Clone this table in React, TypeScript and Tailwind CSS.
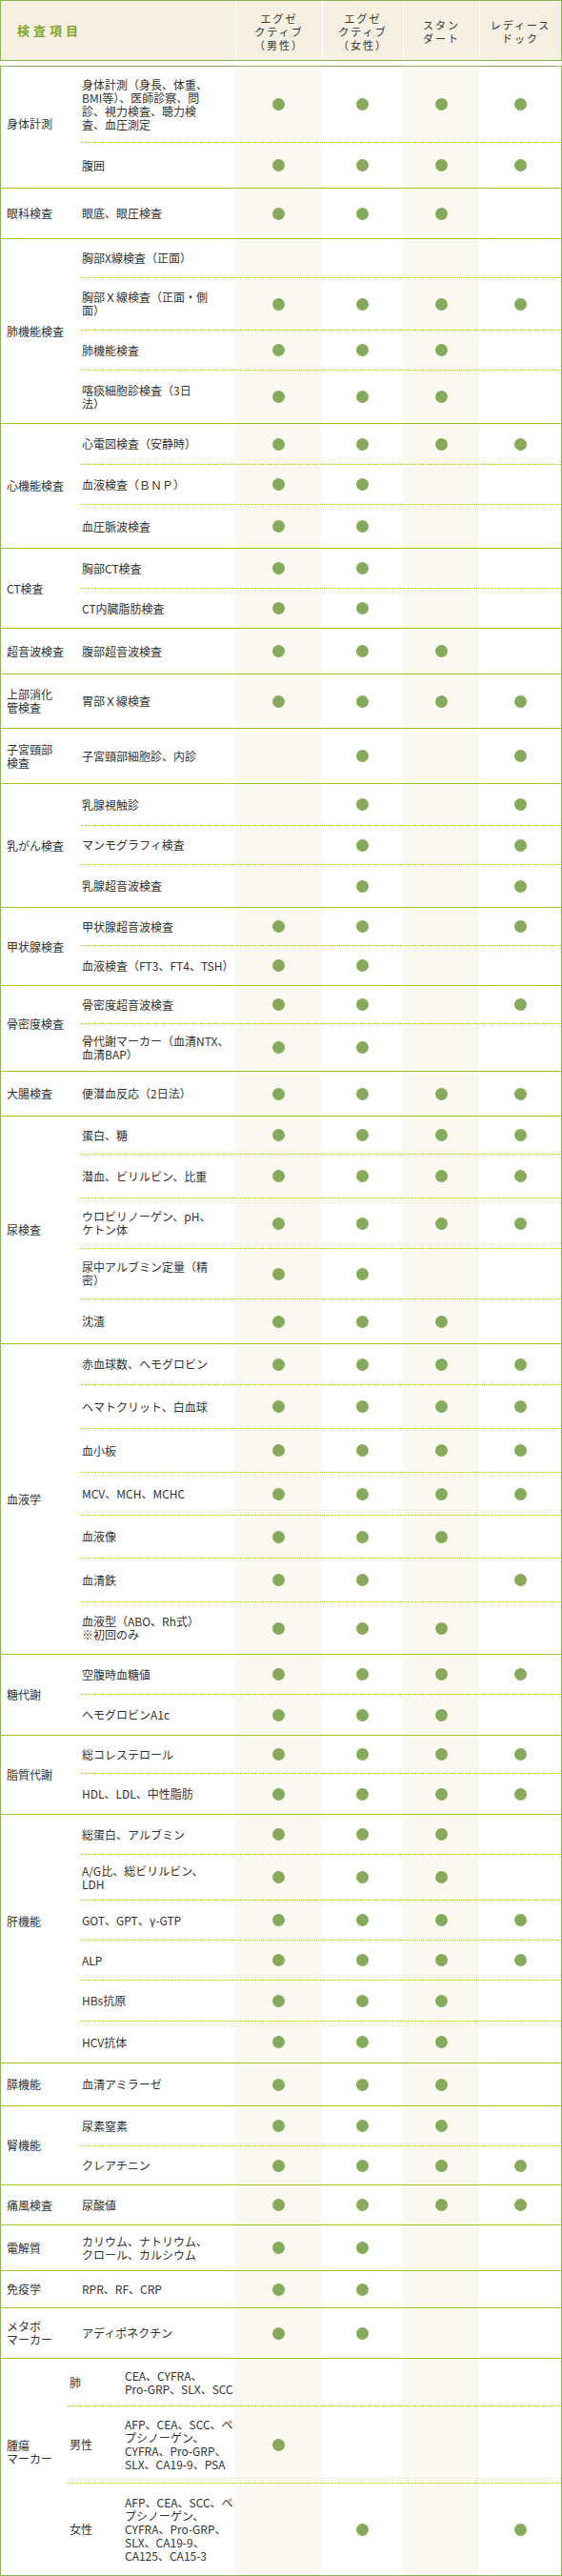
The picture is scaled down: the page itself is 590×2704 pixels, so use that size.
import React from "react";

type Row = { t: string; h: number; d: string; sub?: string };
type Group = { cat: string; rows: Row[]; pb?: string; narrow?: boolean };

const heads = [
  { t: "エグゼ\nクティブ\n（男性）", w: "w-[91px]" },
  { t: "エグゼ\nクティブ\n（女性）", w: "w-[85px]" },
  { t: "スタン\nダート", w: "w-[80px]" },
  { t: "レディース\nドック", w: "flex-1" },
];

const groups: Group[] = [
  {
    cat: "身体計測",
    pb: "pb-[8px]",
    rows: [
      { t: "身体計測（身長、体重、\nBMI等）、医師診察、問\n診、視力検査、聴力検\n査、血圧測定", h: 80, d: "1111" },
      { t: "腹囲", h: 48, d: "1111" },
    ],
  },
  { cat: "眼科検査", rows: [{ t: "眼底、眼圧検査", h: 53, d: "1110" }] },
  {
    cat: "肺機能検査",
    rows: [
      { t: "胸部X線検査（正面）", h: 41, d: "0000" },
      { t: "胸部Ｘ線検査（正面・側\n面）", h: 55, d: "1111" },
      { t: "肺機能検査", h: 42, d: "1110" },
      { t: "喀痰細胞診検査（3日\n法）", h: 56, d: "1110" },
    ],
  },
  {
    cat: "心機能検査",
    rows: [
      { t: "心電図検査（安静時）", h: 43, d: "1111" },
      { t: "血液検査（ＢＮＰ）", h: 42, d: "1100" },
      { t: "血圧脈波検査", h: 46, d: "1100" },
    ],
  },
  {
    cat: "CT検査",
    rows: [
      { t: "胸部CT検査", h: 42, d: "1100" },
      { t: "CT内臓脂肪検査", h: 42, d: "1100" },
    ],
  },
  { cat: "超音波検査", rows: [{ t: "腹部超音波検査", h: 48, d: "1110" }] },
  { cat: "上部消化\n管検査", rows: [{ t: "胃部Ｘ線検査", h: 57, d: "1111" }] },
  { cat: "子宮頸部\n検査", rows: [{ t: "子宮頸部細胞診、内診", h: 58, d: "0101" }] },
  {
    cat: "乳がん検査",
    rows: [
      { t: "乳腺視触診", h: 44, d: "0101" },
      { t: "マンモグラフィ検査", h: 41, d: "0101" },
      { t: "乳腺超音波検査", h: 45, d: "0101" },
    ],
  },
  {
    cat: "甲状腺検査",
    rows: [
      { t: "甲状腺超音波検査", h: 40, d: "1101" },
      { t: "血液検査（FT3、FT4、TSH）", h: 42, d: "1100" },
    ],
  },
  {
    cat: "骨密度検査",
    pb: "pb-[10px]",
    rows: [
      { t: "骨密度超音波検査", h: 40, d: "1101" },
      { t: "骨代謝マーカー（血清NTX、\n血清BAP）", h: 50, d: "1100" },
    ],
  },
  { cat: "大腸検査", rows: [{ t: "便潜血反応（2日法）", h: 47, d: "1111" }] },
  {
    cat: "尿検査",
    rows: [
      { t: "蛋白、糖", h: 40, d: "1111" },
      { t: "潜血、ビリルビン、比重", h: 46, d: "1111" },
      { t: "ウロビリノーゲン、pH、\nケトン体", h: 53, d: "1111" },
      { t: "尿中アルブミン定量（精\n密）", h: 53, d: "1100" },
      { t: "沈渣", h: 47, d: "1110" },
    ],
  },
  {
    cat: "血液学",
    rows: [
      { t: "赤血球数、ヘモグロビン", h: 43, d: "1111" },
      { t: "ヘマトクリット、白血球", h: 46, d: "1111" },
      { t: "血小板", h: 46, d: "1111" },
      { t: "MCV、MCH、MCHC", h: 45, d: "1111" },
      { t: "血液像", h: 45, d: "1110" },
      { t: "血清鉄", h: 46, d: "1101" },
      { t: "血液型（ABO、Rh式）\n※初回のみ", h: 55, d: "1110" },
    ],
  },
  {
    cat: "糖代謝",
    rows: [
      { t: "空腹時血糖値", h: 42, d: "1111" },
      { t: "ヘモグロビンA1c", h: 43, d: "1110" },
    ],
  },
  {
    cat: "脂質代謝",
    rows: [
      { t: "総コレステロール", h: 40, d: "1111" },
      { t: "HDL、LDL、中性脂肪", h: 43, d: "1111" },
    ],
  },
  {
    cat: "肝機能",
    pb: "pb-[36px]",
    rows: [
      { t: "総蛋白、アルブミン", h: 42, d: "1110" },
      { t: "A/G比、総ビリルビン、\nLDH", h: 48, d: "1110" },
      { t: "GOT、GPT、γ-GTP", h: 42, d: "1111" },
      { t: "ALP", h: 42, d: "1111" },
      { t: "HBs抗原", h: 43, d: "1110" },
      { t: "HCV抗体", h: 44, d: "1110" },
    ],
  },
  { cat: "膵機能", rows: [{ t: "血清アミラーゼ", h: 45, d: "1110" }] },
  {
    cat: "腎機能",
    rows: [
      { t: "尿素窒素", h: 42, d: "1110" },
      { t: "クレアチニン", h: 41, d: "1111" },
    ],
  },
  { cat: "痛風検査", rows: [{ t: "尿酸値", h: 42, d: "1111" }] },
  { cat: "電解質", rows: [{ t: "カリウム、ナトリウム、\nクロール、カルシウム", h: 48, d: "1100" }] },
  { cat: "免疫学", rows: [{ t: "RPR、RF、CRP", h: 39, d: "1100" }] },
  { cat: "メタボ\nマーカー", rows: [{ t: "アディポネクチン", h: 53, d: "1100" }] },
  {
    cat: "腫瘍\nマーカー",
    pb: "pb-[32px]",
    narrow: true,
    rows: [
      { sub: "肺", t: "CEA、CYFRA、\nPro-GRP、SLX、SCC", h: 50, d: "0000" },
      { sub: "男性", t: "AFP、CEA、SCC、ペ\nプシノーゲン、\nCYFRA、Pro-GRP、\nSLX、CA19-9、PSA", h: 81, d: "1000" },
      { sub: "女性", t: "AFP、CEA、SCC、ペ\nプシノーゲン、\nCYFRA、Pro-GRP、\nSLX、CA19-9、\nCA125、CA15-3", h: 97, d: "0101" },
    ],
  },
];

const dotCols = [
  "w-[91px] bg-[#faf8f1]",
  "w-[85px]",
  "w-[80px] bg-[#faf8f1]",
  "flex-1",
];

function Dot() {
  return <span className="block h-[13px] w-[13px] rounded-full bg-[#86aa5c]" />;
}

function Header() {
  return (
    <div className="flex h-[64px] border border-[#8cb25a] bg-[#f5f0e1]">
      <div className="flex w-[246px] items-center pl-[17px] text-[13px] font-bold tracking-[4px] text-[#7ea62c]">
        検査項目
      </div>
      {heads.map((h) => (
        <div
          key={h.t}
          className={`flex ${h.w} items-center justify-center whitespace-pre-line border-l border-white pt-[2px] text-center text-[11px] leading-[14px] tracking-[2px]`}
        >
          {h.t}
        </div>
      ))}
    </div>
  );
}

function GroupBlock({ g, first }: { g: Group; first: boolean }) {
  return (
    <div className={`flex ${first ? "" : "border-t border-[#9cc42e]"}`}>
      <div
        className={`flex ${g.narrow ? "w-[70px]" : "w-[84px]"} items-center whitespace-pre-line pl-[6px] ${g.pb ?? ""}`}
      >
        {g.cat}
      </div>
      <div className="flex flex-1 flex-col">
        {g.rows.map((r, i) => (
          <div
            key={i}
            className={`flex ${i > 0 ? "border-t border-dotted border-[#a2c43a]" : ""}`}
            style={{ height: i === 0 ? r.h - 1 : r.h }}
          >
            {r.sub !== undefined ? (
              <>
                <div className="flex w-[59px] items-center pl-[2px]">{r.sub}</div>
                <div className="flex w-[117px] items-center whitespace-pre-line pl-px">{r.t}</div>
              </>
            ) : (
              <div className="flex w-[162px] items-center whitespace-pre-line pl-px">{r.t}</div>
            )}
            {dotCols.map((c, ci) => (
              <div key={ci} className={`flex ${c} items-center justify-center`}>
                {r.d[ci] === "1" ? <Dot /> : null}
              </div>
            ))}
          </div>
        ))}
      </div>
    </div>
  );
}

export default function App() {
  return (
    <div className="w-[590px] bg-white font-['Noto_Sans_CJK_JP',sans-serif] text-[12px] leading-[14px] text-[#333]">
      <Header />
      <div className="mt-[5px] border border-[#8cb25a]">
        {groups.map((g, gi) => (
          <GroupBlock key={gi} g={g} first={gi === 0} />
        ))}
      </div>
    </div>
  );
}
